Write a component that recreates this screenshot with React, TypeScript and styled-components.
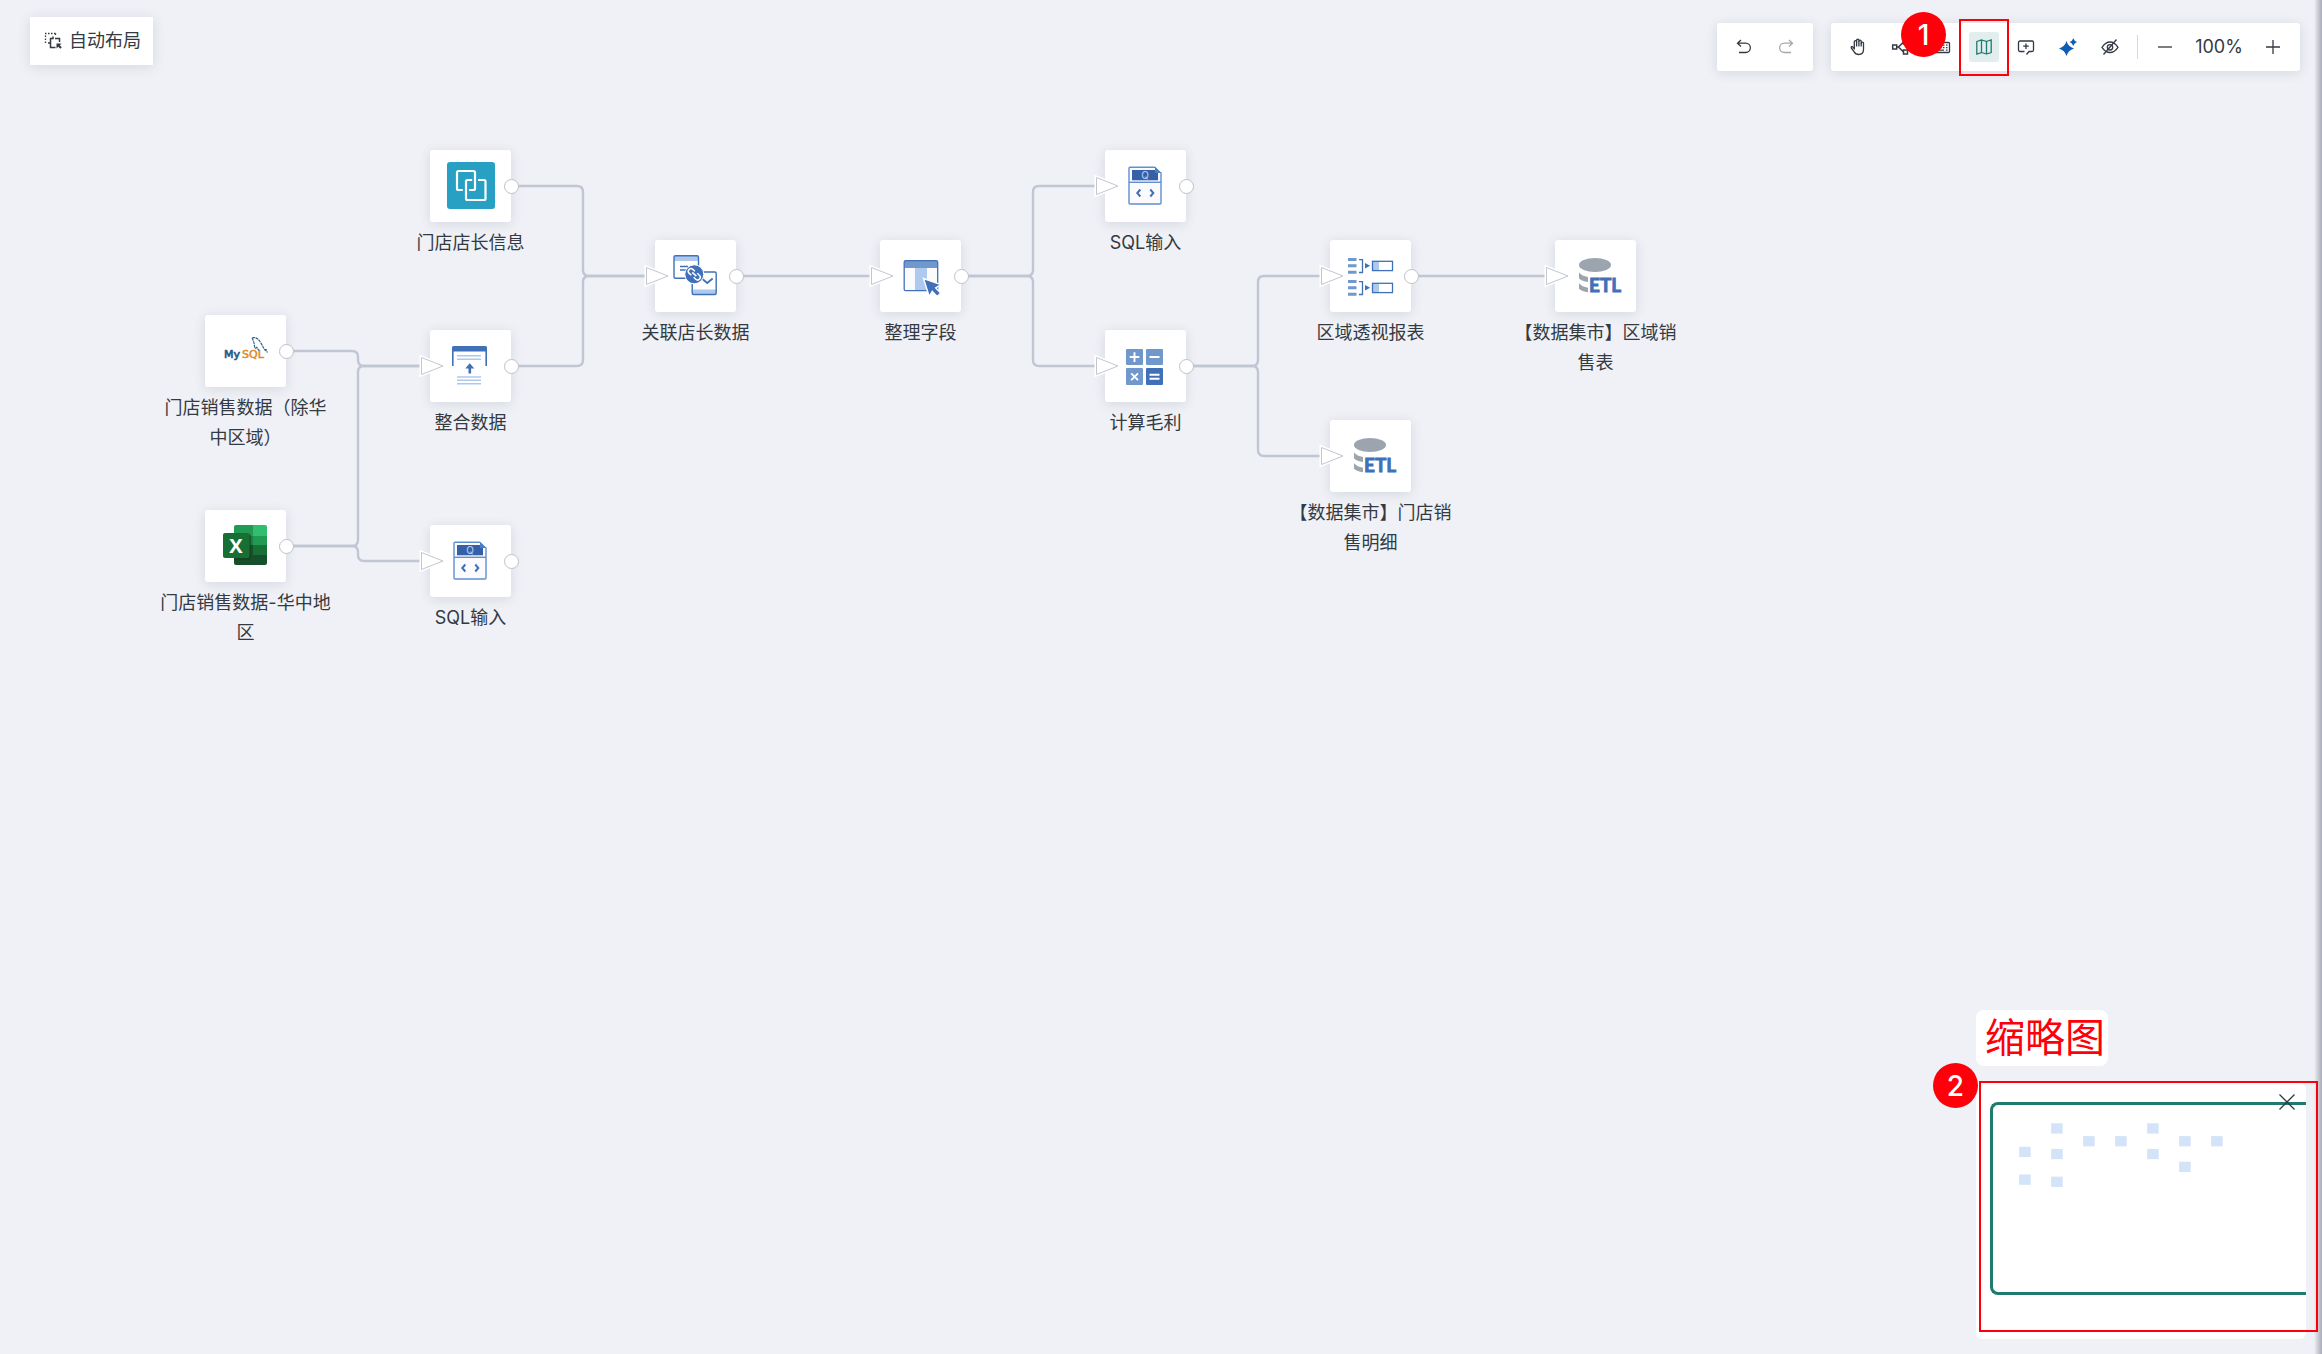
import React from "react";
import styled, { createGlobalStyle } from "styled-components";

const color = {
  canvas: "#eff1f6",
  text: "#343a42",
  line: "#c0c6d3",
  teal: "#1f7a70",
  blue: "#4070b8",
  mid: "#7098cb",
  pale: "#adc9f0",
  mark: "#ff000a",
};

const GlobalStyle = createGlobalStyle`
  * { box-sizing: border-box; }
  body {
    margin: 0;
    background: ${color.canvas};
    color: ${color.text};
    font-family: Inter, "Noto Sans CJK SC", sans-serif;
    font-size: 18px;
    line-height: 30px;
  }
  button { font: inherit; color: inherit; border: 0; padding: 0; background: none; cursor: pointer; }
  svg { display: block; }
`;

const Page = styled.main`
  position: relative;
  min-height: 100vh;
  display: flex;
  flex-direction: column;
  justify-content: space-between;
  overflow: hidden;
`;

const EdgeShade = styled.div`
  position: absolute;
  inset: 0 0 0 auto;
  width: 8px;
  background: linear-gradient(to right, rgba(150, 153, 165, 0), rgba(150, 153, 165, 0.8));
`;

const Header = styled.header`
  position: relative;
  display: flex;
  justify-content: space-between;
  align-items: flex-start;
  padding: 17px 22px 0 30px;
`;

const Panel = styled.div`
  display: flex;
  align-items: center;
  height: 48px;
  background: #fff;
  border-radius: 3px;
  box-shadow: 0 2px 12px rgba(60, 66, 90, 0.14);
`;

const LayoutButton = styled(Panel).attrs({ as: "button", type: "button" })`
  padding: 0 12px 0 14px;
  gap: 7px;
  border-radius: 0;
`;

const Toolbars = styled.div`
  display: flex;
  gap: 18px;
  padding-top: 6px;
`;

const ToolGroup = styled(Panel)`
  padding: 0 6px;
`;

const ToolSlot = styled.span`
  position: relative;
  display: grid;
  place-items: center;
  width: 42px;
  height: 48px;
`;

const Tool = styled.button<{ $active?: boolean; $muted?: boolean }>`
  display: grid;
  place-items: center;
  width: 30px;
  height: 30px;
  border-radius: 3px;
  background: ${(p) => (p.$active ? "#e1eeed" : "transparent")};
  color: ${(p) => (p.$active ? color.teal : p.$muted ? "#a4a8af" : color.text)};
`;

const Divider = styled.span`
  width: 1px;
  height: 24px;
  margin: 0 6px;
  background: #d5d8dd;
`;

const Zoom = styled.output`
  width: 66px;
  text-align: center;
`;

const Frame = styled.span`
  position: absolute;
  border: 2px solid ${color.mark};
  pointer-events: none;
`;

const ToolFrame = styled(Frame)`
  inset: -4px -4px -5px -4px;
`;

const MapFrame = styled(Frame)`
  inset: -2px -12px 7px 3px;
`;

const Badge = styled.span<{ $left: number; $top: number }>`
  position: absolute;
  left: ${(p) => p.$left}px;
  top: ${(p) => p.$top}px;
  display: grid;
  place-items: center;
  width: 45px;
  height: 45px;
  border-radius: 50%;
  background: ${color.mark};
  color: #fff;
  font-size: 28px;
  font-weight: 500;
`;

const Footer = styled.aside`
  position: relative;
  align-self: flex-end;
  display: flex;
  flex-direction: column;
  align-items: flex-start;
  gap: 17px;
  padding: 0 16px 15px 0;
`;

const Caption = styled.p`
  margin: 0;
  padding: 0 3px 0 9px;
  border-radius: 8px;
  background: #fff;
  color: ${color.mark};
  font-size: 40px;
  font-weight: 400;
  line-height: 56px;
`;

const MiniPanel = styled.section`
  position: relative;
  width: 330px;
  height: 256px;
  padding: 19px 0 0 14px;
  border-radius: 6px;
  background: #fff;
`;

const Viewport = styled.div`
  height: 193px;
  border: 3px solid ${color.teal};
  border-right: 0;
  border-radius: 8px 0 0 8px;
`;

const MiniMap = styled.svg`
  margin: -3px;
`;

const Close = styled.button`
  position: absolute;
  right: 10px;
  top: 10px;
`;

const Canvas = styled.div`
  position: absolute;
  inset: 0;
`;

const Edges = styled.svg`
  position: absolute;
  inset: 0;
  width: 100%;
  height: 100%;
`;

const NodeItem = styled.div<{ $x: number; $y: number }>`
  position: absolute;
  left: ${(p) => p.$x - 48}px;
  top: ${(p) => p.$y}px;
  display: flex;
  flex-direction: column;
  align-items: center;
  gap: 6px;
  width: 177px;
  text-align: center;
`;

const Card = styled.div`
  position: relative;
  width: 81px;
  height: 72px;
  border-radius: 3px;
  background: #fff;
  box-shadow: 0 2px 12px rgba(60, 66, 90, 0.14);
`;

const OutPort = styled.span`
  position: absolute;
  right: -8px;
  top: 29px;
  width: 15px;
  height: 15px;
  border: 1px solid #bcc2cb;
  border-radius: 50%;
  background: #fff;
`;

const InPort = styled.svg`
  position: absolute;
  left: -11px;
  top: 25px;
`;

/* ---------- node icons, drawn in the 81x72 space of a card ---------- */

const Picture = ({ children }: { children: React.ReactNode }) => (
  <svg width="81" height="72" viewBox="0 0 81 72" fill="none" aria-hidden="true">
    {children}
  </svg>
);

const MySqlIcon = () => (
  <Picture>
    <text x="19" y="43" fontFamily="DejaVu Sans" fontSize="11" fill="#2a5d8a" stroke="#2a5d8a" strokeWidth=".7">My</text>
    <text x="37" y="43" fontFamily="DejaVu Sans" fontSize="11" fill="#dd8a25" stroke="#dd8a25" strokeWidth=".5">SQL</text>
    <path d="M47 23c3-1.200 6 .5 8 3.500 2 3 3 5.500 4.500 8 1 .8 2 1.500 3 3M47 23c1 1.200.8 2 1.500 3.500 1 2 .5 4 1.500 6.500.8 1.500 1-.5 1.700-.8 1 1.500 1.200 2.300 2.300 3.300M60 34.500l2 .3" stroke="#2f6590" strokeWidth="1.200" strokeDasharray="3 .6" />
  </Picture>
);

const ExcelIcon = () => (
  <Picture>
    <clipPath id="book"><rect x="29" y="15" width="33" height="40" rx="2" /></clipPath>
    <g clipPath="url(#book)">
      <path fill="#219a53" d="M29 15h19v11H29z" />
      <path fill="#31be6e" d="M48 15h14v11H48z" />
      <path fill="#1a7f40" d="M29 26h19v9H29z" />
      <path fill="#219a53" d="M48 26h14v9H48z" />
      <path fill="#174f2b" d="M29 35h19v10H29z" />
      <path fill="#196f35" d="M48 35h14v10H48z" />
      <path fill="#174f2b" d="M29 45h33v10H29z" />
      <path fill="#0d3f20" opacity=".6" d="M29 24h15q2 0 2 2v22q0 2-2 2H29z" />
    </g>
    <rect x="18" y="23" width="26.500" height="25" rx="2" fill="#176f33" />
    <text x="31" y="43" textAnchor="middle" fontFamily="Open Sans" fontWeight="700" fontSize="20" fill="#fff">X</text>
  </Picture>
);

const LinkIcon = () => (
  <Picture>
    <rect x="17" y="12" width="48" height="47" rx="3" fill="#27a0c3" />
    <g stroke="#fff" strokeWidth="2.200">
      <path d="M32.800 40H28.500q-1.500 0-1.500-1.500V22.500q0-1.500 1.500-1.500h15q1.500 0 1.500 1.500v16q0 1.500-1.500 1.500H39" />
      <path d="M42.200 30H37.500q-1.500 0-1.500 1.500v17q0 1.500 1.500 1.500h16.500q1.500 0 1.500-1.500V31.500q0-1.500-1.500-1.500H48" />
    </g>
  </Picture>
);

const MergeIcon = () => (
  <Picture>
    <path fill={color.blue} d="M22 17.500q0-1.500 1.500-1.500h32q1.500 0 1.500 1.500V36h-1.600V21.500H23.600V36H22z" />
    <path stroke={color.pale} strokeWidth="1.400" d="M27 25.800h24M27 29.200h24M27 47h24M27 50.300h24M27 53.700h24" />
    <path fill={color.blue} d="M39.700 33.300l4.600 5.200h-3.200v5h-2.600v-5h-3.200z" />
  </Picture>
);

const JoinIcon = () => (
  <Picture>
    <path fill={color.pale} d="M19 16h24v5H19zM37.500 49.500h23.500v5H37.500z" />
    <g stroke={color.blue} strokeWidth="1.400">
      <rect x="19" y="15.800" width="24.500" height="22.500" rx="1.500" />
      <path d="M25 26.500h8M25 30h8" />
      <rect x="37.200" y="32" width="24" height="22.500" rx="1.500" />
      <path d="M47.500 39l4.700 4 5.500-4.500" strokeWidth="1.800" />
    </g>
    <circle cx="39.300" cy="34.300" r="9.500" fill={color.blue} stroke="#fff" />
    <g stroke="#fff" strokeWidth="1.500" transform="rotate(42 39.300 34.300)">
      <path d="M37.800 37H34.900a2.700 2.700 0 010-5.400h2.900M40.800 31.600h2.900a2.700 2.700 0 010 5.400h-2.900M36.500 34.300h5.600" />
    </g>
  </Picture>
);

const ColumnsIcon = () => (
  <Picture>
    <rect x="24.200" y="20.700" width="33.500" height="30" rx="1.500" fill="#fbfbfe" />
    <path fill={color.mid} d="M24.500 21h33v7h-33z" />
    <path fill={color.pale} d="M35 28h12v22H35z" />
    <rect x="24.200" y="20.700" width="33.500" height="30" rx="1.500" stroke={color.blue} strokeWidth="1.300" />
    <path fill={color.blue} stroke="#fff" strokeWidth="1.400" d="M43.500 38.500l17.500 6.200-5.300 3.300 5 5-3.500 3.500-5-5-3 5z" />
  </Picture>
);

const SqlIcon = () => (
  <Picture>
    <path d="M25 17.300h25.500l5.500 5.500V53a1 1 0 01-1 1H25a1 1 0 01-1-1V18.300a1 1 0 011-1z" fill="#fbfbfe" stroke="#5f8fd2" strokeWidth="1.400" />
    <path fill="#355fa6" d="M27 20h26v10.300H27z" />
    <path fill="#fff" d="M49.500 16h7v7z" />
    <path fill="#4b7ec6" d="M50 17v6h6.500z" />
    <text x="40" y="28.800" textAnchor="middle" fontFamily="Inter" fontSize="10" fontWeight="500" fill="#aac6ee">Q</text>
    <path stroke="#5f8fd2" strokeWidth="1.400" d="M24 32.300h32" />
    <path stroke={color.blue} strokeWidth="2" d="M35.300 39.500L32.300 43l3 3.500M45.300 39.500l3 3.500-3 3.500" />
  </Picture>
);

const CalcIcon = () => (
  <Picture>
    <rect x="21" y="19" width="17" height="16" rx="1" fill={color.mid} />
    <rect x="41" y="19" width="17" height="16" rx="1" fill={color.mid} />
    <rect x="21" y="38" width="17" height="17" rx="1" fill={color.mid} />
    <rect x="41" y="38" width="17" height="17" rx="1" fill={color.blue} />
    <path stroke="#fff" strokeWidth="1.900" d="M29.500 22.300v9.600M24.700 27h9.600M44.500 27h10M26.200 43.300l6.800 6.800M33 43.300l-6.800 6.800M44.500 44.800h10M44.500 48.800h10" />
  </Picture>
);

const PivotIcon = () => (
  <Picture>
    {[0, 22].map((dy) => (
      <g key={dy} transform={`translate(0 ${dy})`}>
        <path fill={color.mid} d="M18 18h8.500v3H18zM18 24.300h8.500v3H18zM18 30.700h8.500v3H18z" />
        <path stroke={color.blue} strokeWidth="1.300" d="M29 19.700h3.500v12.800H29" />
        <path fill={color.blue} d="M35 23l5.200 2.800-5.200 2.800z" />
        <path fill={color.pale} d="M42.500 21.500H49v9h-6.500z" />
        <rect x="42.500" y="21.300" width="20" height="9.300" stroke={color.blue} strokeWidth="1.300" />
      </g>
    ))}
  </Picture>
);

const EtlIcon = () => (
  <Picture>
    <ellipse cx="40" cy="25" rx="16" ry="7" fill="#9ca5af" />
    <path fill="#9ca5af" d="M24 32.500q3 3.500 9 4.500v5q-6-.8-9-3.500zM24 43.300q3 3.500 9 4.500v4.500q-6-.8-9-3.500z" />
    <text x="34" y="52" fontFamily="Lato" fontWeight="700" fontSize="19" fill={color.blue} stroke={color.blue} strokeWidth=".8">ETL</text>
  </Picture>
);

/* ---------- toolbar icons ---------- */

const Glyph = ({ size = 18, children }: { size?: number; children: React.ReactNode }) => (
  <svg width={size} height={size} viewBox="0 0 18 18" fill="none" stroke="currentColor" strokeWidth="1.300" aria-hidden="true">
    {children}
  </svg>
);

const UndoPath = () => <path d="M6 2L2.500 5.200 6 8.500M2.500 5.200h8.200a4.600 4.600 0 010 9.300H4" />;

/* ---------- flow data ---------- */

type FlowNode = { id: string; x: number; y: number; label: string; icon: React.FC; input?: boolean; output?: boolean };

const nodes: FlowNode[] = [
  { id: "mysql", x: 205, y: 315, label: "门店销售数据（除华中区域）", icon: MySqlIcon, output: true },
  { id: "excel", x: 205, y: 510, label: "门店销售数据-华中地区", icon: ExcelIcon, output: true },
  { id: "managers", x: 430, y: 150, label: "门店店长信息", icon: LinkIcon, output: true },
  { id: "merge", x: 430, y: 330, label: "整合数据", icon: MergeIcon, input: true, output: true },
  { id: "sqlA", x: 430, y: 525, label: "SQL输入", icon: SqlIcon, input: true, output: true },
  { id: "join", x: 655, y: 240, label: "关联店长数据", icon: JoinIcon, input: true, output: true },
  { id: "fields", x: 880, y: 240, label: "整理字段", icon: ColumnsIcon, input: true, output: true },
  { id: "sqlB", x: 1105, y: 150, label: "SQL输入", icon: SqlIcon, input: true, output: true },
  { id: "profit", x: 1105, y: 330, label: "计算毛利", icon: CalcIcon, input: true, output: true },
  { id: "pivot", x: 1330, y: 240, label: "区域透视报表", icon: PivotIcon, input: true, output: true },
  { id: "etlStore", x: 1330, y: 420, label: "【数据集市】门店销售明细", icon: EtlIcon, input: true },
  { id: "etlArea", x: 1555, y: 240, label: "【数据集市】区域销售表", icon: EtlIcon, input: true },
];

const links = [
  ["mysql", "merge"], ["excel", "merge"], ["excel", "sqlA"], ["managers", "join"], ["merge", "join"],
  ["join", "fields"], ["fields", "sqlB"], ["fields", "profit"], ["profit", "pivot"], ["profit", "etlStore"],
  ["pivot", "etlArea"],
];

function route(fromId: string, toId: string) {
  const from = nodes.find((n) => n.id === fromId)!;
  const to = nodes.find((n) => n.id === toId)!;
  const y1 = from.y + 36;
  const y2 = to.y + 36;
  const mid = from.x + 153;
  const start = `M${from.x + 88} ${y1}`;
  if (y1 === y2) return `${start}H${to.x - 9}`;
  const r = y2 > y1 ? 6 : -6;
  return `${start}H${mid - 6}Q${mid} ${y1} ${mid} ${y1 + r}V${y2 - r}Q${mid} ${y2} ${mid + 6} ${y2}H${to.x - 9}`;
}

const MINI = 32 / 225;

export default function App() {
  return (
    <>
      <GlobalStyle />
      <Page>
        <Canvas>
          <Edges fill="none" stroke={color.line} strokeWidth="2.400" aria-hidden="true">
            {links.map(([a, b]) => <path key={a + b} d={route(a, b)} />)}
          </Edges>
          {nodes.map(({ id, x, y, label, icon: Icon, input, output }) => (
            <NodeItem key={id} $x={x} $y={y}>
              <Card>
                <Icon />
                {input && (
                  <InPort width="26" height="22" viewBox="0 0 26 22">
                    <path d="M2.500 2.500v17L24 11z" fill="#fff" stroke="#fff" strokeWidth="4" />
                    <path d="M2.500 2.500v17L24 11z" fill="#fff" stroke="#c2c7cf" />
                  </InPort>
                )}
                {output && <OutPort />}
              </Card>
              <span>{label}</span>
            </NodeItem>
          ))}
        </Canvas>
        <EdgeShade />

        <Header>
          <LayoutButton>
            <Glyph>
              <path d="M1 1.500h11M1.500 3.500V12M11.500 1.500V4" strokeDasharray="1.500 1.500" />
              <path d="M11.500 15.500H6.500V6.500H9M11 6.500h4.500V10M9 4.500v2.800M4 11h2.500" strokeWidth="1.500" />
              <path d="M12.500 11.500h5l-1.700 1.700 2 2-1.500 1.500-2-2-1.800 1.800z" fill="currentColor" stroke="none" />
            </Glyph>
            自动布局
          </LayoutButton>

          <Toolbars>
            <ToolGroup>
              <ToolSlot><Tool aria-label="撤销"><Glyph><UndoPath /></Glyph></Tool></ToolSlot>
              <ToolSlot>
                <Tool $muted aria-label="重做"><Glyph><g transform="matrix(-1 0 0 1 18 0)"><UndoPath /></g></Glyph></Tool>
              </ToolSlot>
            </ToolGroup>
            <ToolGroup>
              <ToolSlot>
                <Tool aria-label="拖动">
                  <Glyph>
                    <path
                      d="M5.300 11V3.800a1.100 1.100 0 012.300 0V2.300a1.100 1.100 0 012.300 0v.9a1.100 1.100 0 012.300 0v2a1.100 1.100 0 012.300 0v6.300c0 3-1.900 5-4.800 5-2.300 0-3.600-.9-4.700-2.900L2.300 10c-.6-1.200.8-2 1.700-.9z"
                      strokeLinejoin="round"
                    />
                    <path d="M7.600 3.800v4.700M9.900 3v5.500M12.200 5v3.500" />
                  </Glyph>
                </Tool>
              </ToolSlot>
              <ToolSlot>
                <Tool aria-label="节点">
                  <Glyph>
                    <path d="M1.700 7h4v4h-4zM12.500 2h4v4h-4zM12.500 12h4v4h-4zM5.700 9H8M12.500 4L7.500 9l5 5" strokeWidth="1.500" />
                  </Glyph>
                </Tool>
              </ToolSlot>
              <ToolSlot>
                <Tool aria-label="快捷键">
                  <Glyph>
                    <rect x="1.500" y="4.500" width="15" height="10" rx="1" />
                    <path d="M4 7.200h1.500M7 7.200h1.500M10 7.200h1.500M13 7.200h1.500M4 9.700h1.500M7 9.700h1.500M10 9.700h1.500M13 9.700h1.500M4 12.200h7M13 12.200h1.500" />
                  </Glyph>
                </Tool>
              </ToolSlot>
              <ToolSlot>
                <Tool $active aria-label="缩略图">
                  <Glyph>
                    <path d="M1.800 3.500L6.500 2v12.500L1.800 16zM6.500 2l5 1.500V16l-5-1.500M11.500 3.500L16.200 2v12.500L11.500 16" />
                  </Glyph>
                </Tool>
                <ToolFrame />
                <Badge $left={-62} $top={-11}>1</Badge>
              </ToolSlot>
              <ToolSlot>
                <Tool aria-label="批注">
                  <Glyph>
                    <path d="M7.500 13.500H3A1.500 1.500 0 011.500 12V4.500A1.500 1.500 0 013 3h12a1.500 1.500 0 011.500 1.500V12a1.500 1.500 0 01-1.500 1.500h-3L9.500 16.500M9 5.500v5.500M6.200 8.200h5.600" />
                  </Glyph>
                </Tool>
              </ToolSlot>
              <ToolSlot>
                <Tool aria-label="智能助手">
                  <Glyph>
                    <path fill="#0d5cb8" stroke="none" d="M7.500 3q1.600 5.600 7.500 7.500-5.900 1.900-7.500 7.500Q5.900 12.400 0 10.500 5.900 8.600 7.500 3zM14.300.3q.9 2.900 3.700 3.800-2.800.9-3.700 3.800-.9-2.900-3.700-3.800 2.800-.9 3.700-3.800z" />
                  </Glyph>
                </Tool>
              </ToolSlot>
              <ToolSlot>
                <Tool aria-label="隐藏">
                  <Glyph>
                    <path d="M1 9.300Q4.500 4 9 4t8 5.300Q13.500 14.500 9 14.500T1 9.300zM15.500 1.500l-13 15" />
                    <circle cx="9" cy="9.300" r="2.700" />
                  </Glyph>
                </Tool>
              </ToolSlot>
              <Divider />
              <ToolSlot><Tool aria-label="缩小"><Glyph><path d="M2 9h14" /></Glyph></Tool></ToolSlot>
              <Zoom>100%</Zoom>
              <ToolSlot><Tool aria-label="放大"><Glyph><path d="M2 9h14M9 2v14" /></Glyph></Tool></ToolSlot>
            </ToolGroup>
          </Toolbars>
        </Header>

        <Footer>
          <Caption>缩略图</Caption>
          <MiniPanel>
            <Viewport>
              <MiniMap width="316" height="193">
                {nodes.map((n) => (
                  <rect key={n.id} x={n.x * MINI} y={n.y * MINI} width={81 * MINI} height={72 * MINI} fill="#d3e3f8" />
                ))}
              </MiniMap>
            </Viewport>
            <Close aria-label="关闭">
              <Glyph><path d="M1.500 1.500l15 15M16.500 1.500l-15 15" /></Glyph>
            </Close>
            <MapFrame />
            <Badge $left={-43} $top={-20}>2</Badge>
          </MiniPanel>
        </Footer>
      </Page>
    </>
  );
}
